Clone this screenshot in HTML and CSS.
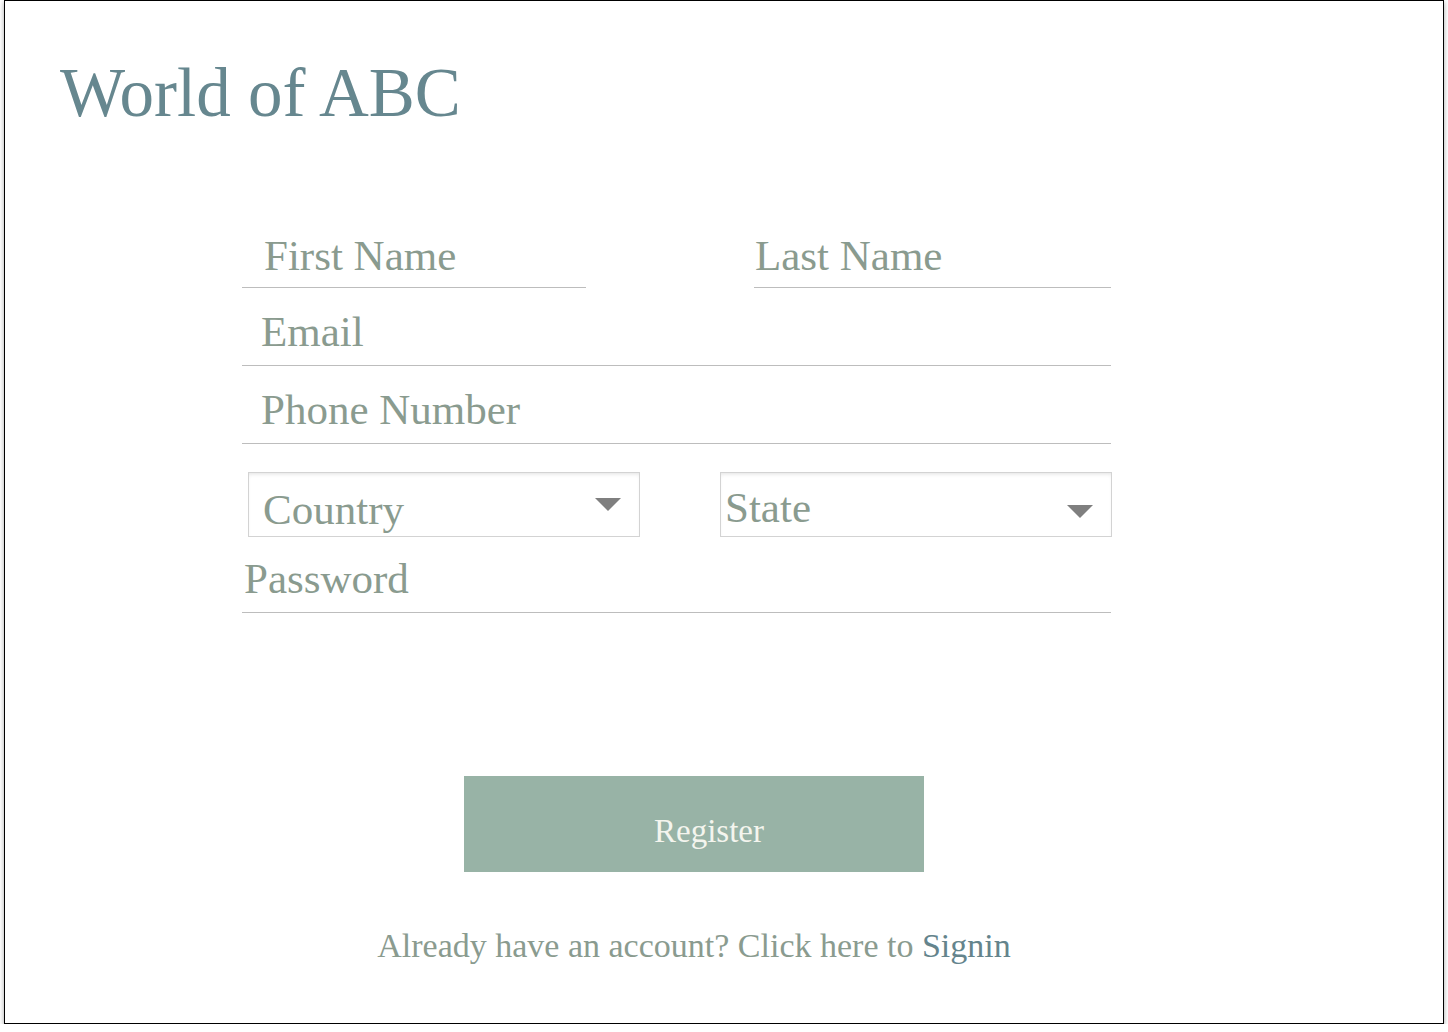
FILE: index.html
```html
<!DOCTYPE html>
<html lang="en">
<head>
<meta charset="utf-8">
<title>World of ABC - Register</title>
<link rel="stylesheet" href="styles.css">
</head>
<body>
<div class="frame">
  <h1 class="brand">World of ABC</h1>
  <form class="form">
    <div class="row">
      <div class="field field-first">First Name</div>
      <div class="field field-last">Last Name</div>
    </div>
    <div class="field field-wide">Email</div>
    <div class="field field-wide">Phone Number</div>
    <div class="row select-row">
      <div class="select select-country">
        <span class="select-text">Country</span>
        <span class="caret"></span>
      </div>
      <div class="select select-state">
        <span class="select-text">State</span>
        <span class="caret"></span>
      </div>
    </div>
    <div class="field field-wide field-password">Password</div>
    <div class="button">Register</div>
    <div class="footer">
      <span>Already have an account? Click here to <span class="link">Signin</span></span>
    </div>
  </form>
</div>
</body>
</html>
```
FILE: styles.css
```css
html, body {
  margin: 0;
  padding: 0;
  background: #ffffff;
}
body {
  font-family: "Liberation Serif", "Times New Roman", serif;
}
.frame {
  box-sizing: border-box;
  margin-left: 4px;
  width: 1440px;
  height: 1024px;
  border: 1px solid #000;
  background: #fff;
  box-shadow: 0 2px 5px rgba(0, 0, 0, 0.35);
}
.brand {
  margin: 52px 0 0 0;
  padding-left: 55px;
  font-size: 69px;
  line-height: 80px;
  font-weight: normal;
  color: #66878f;
}
.form {
  margin: 77px 0 0 237px;
  width: 870px;
  color: #8a9b8f;
}
.row {
  display: flex;
}
.field {
  box-sizing: border-box;
  padding-top: 20px;
  padding-bottom: 9px;
  font-size: 43px;
  line-height: 48px;
  white-space: nowrap;
  border-bottom: 1px solid #bdbdbd;
}
.field-first {
  width: 344px;
  padding-left: 22px;
  padding-top: 22px;
  padding-bottom: 7px;
}
.field-last {
  width: 357px;
  margin-left: 168px;
  padding-left: 1px;
  padding-top: 22px;
  padding-bottom: 7px;
}
.field-wide {
  width: 869px;
  padding-left: 19px;
}
.select-row {
  margin-top: 28px;
}
.select {
  box-sizing: border-box;
  width: 392px;
  height: 65px;
  border: 1px solid #d3d3d3;
  box-shadow: inset 0 3px 4px -2px rgba(0, 0, 0, 0.12);
  display: flex;
  justify-content: space-between;
  align-items: flex-start;
  font-size: 43px;
  line-height: 48px;
  white-space: nowrap;
}
.select-country {
  margin-left: 6px;
  padding-left: 14px;
}
.select-country .select-text {
  padding-top: 13px;
}
.select-country .caret {
  margin-top: 25px;
}
.select-state {
  margin-left: 80px;
  padding-left: 4px;
}
.select-state .select-text {
  padding-top: 11px;
}
.select-state .caret {
  margin-top: 32px;
}
.caret {
  width: 0;
  height: 0;
  margin-right: 18px;
  border-left: 13px solid transparent;
  border-right: 13px solid transparent;
  border-top: 13px solid #7f7f7f;
}
.field-password {
  padding-top: 18px;
  padding-left: 2px;
}
.button {
  margin: 163px 0 0 222px;
  width: 460px;
  height: 96px;
  box-sizing: border-box;
  padding-left: 30px;
  padding-top: 14px;
  background: #98b3a6;
  color: #f4f5ee;
  font-size: 33px;
  line-height: 82px;
  text-align: center;
}
.footer {
  margin: 56px 0 0 222px;
  width: 460px;
  display: flex;
  justify-content: center;
  white-space: nowrap;
  font-size: 34px;
  line-height: 36px;
  color: #8a9b8f;
}
.link {
  color: #64848c;
}
```
